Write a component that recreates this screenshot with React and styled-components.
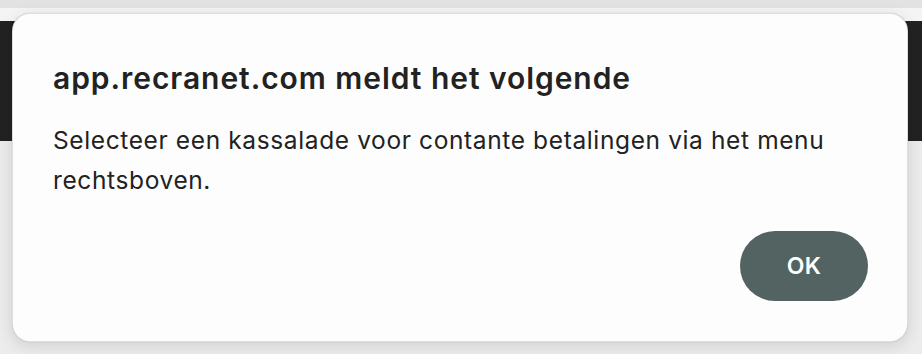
import React from 'react';
import styled, { createGlobalStyle } from 'styled-components';

const GlobalStyle = createGlobalStyle`
 html, body {
  margin: 0;
  padding: 0;
  background: #ececec;
  font-family: Inter, "Liberation Sans", sans-serif;
  -webkit-font-smoothing: antialiased;
 }
`;

const Page = styled.div`
 position: relative;
 width: 922px;
 height: 354px;
 overflow: hidden;
 display: flex;
 flex-direction: column;
`;

const Band = styled.div`
 height: ${p => p.h}px;
 background: ${p => p.bg};
 flex-shrink: 0;
`;

const Rest = styled.div`
 flex: 1;
 background: #ececec;
`;

// the alert box lies over the page behind it
const Dialog = styled.div`
 position: absolute;
 top: 13px;
 left: 12px;
 width: 896px;
 height: 329px;
 box-sizing: border-box;
 background: #fdfdfd;
 border-radius: 18px;
 border: 1px solid rgba(0, 0, 0, 0.12);
 box-shadow: 0 4px 16px rgba(0, 0, 0, 0.12), 0 0 1px rgba(0, 0, 0, 0.2);
 padding: 46px 39px 40px 40px;
 display: flex;
 flex-direction: column;
`;

const Title = styled.h1`
 margin: 0;
 font-size: 30px;
 font-weight: 600;
 line-height: 36px;
 letter-spacing: 0.95px;
 color: #222;
`;

const Message = styled.p`
 margin: 24px 0 0;
 font-size: 24.5px;
 font-weight: 400;
 line-height: 40px;
 letter-spacing: 0.62px;
 color: #222;
`;

const Footer = styled.div`
 margin-top: auto;
 display: flex;
 justify-content: flex-end;
`;

const OkButton = styled.button`
 width: 128px;
 height: 70px;
 border: none;
 border-radius: 35px;
 background: #536361;
 color: #fff;
 font-family: Inter, "Liberation Sans", sans-serif;
 font-size: 23px;
 font-weight: 600;
 letter-spacing: 0.3px;
 cursor: pointer;
`;

export default function App() {
 return (
  <Page>
   <GlobalStyle />
   <Band h={8} bg="#e2e2e2" />
   <Band h={13} bg="#f4f4f4" />
   <Band h={120} bg="#222222" />
   <Rest />
   <Dialog>
    <Title>app.recranet.com meldt het volgende</Title>
    <Message>
     Selecteer een kassalade voor contante betalingen via het menu
     <br />
     rechtsboven.
    </Message>
    <Footer>
     <OkButton>OK</OkButton>
    </Footer>
   </Dialog>
  </Page>
 );
}
